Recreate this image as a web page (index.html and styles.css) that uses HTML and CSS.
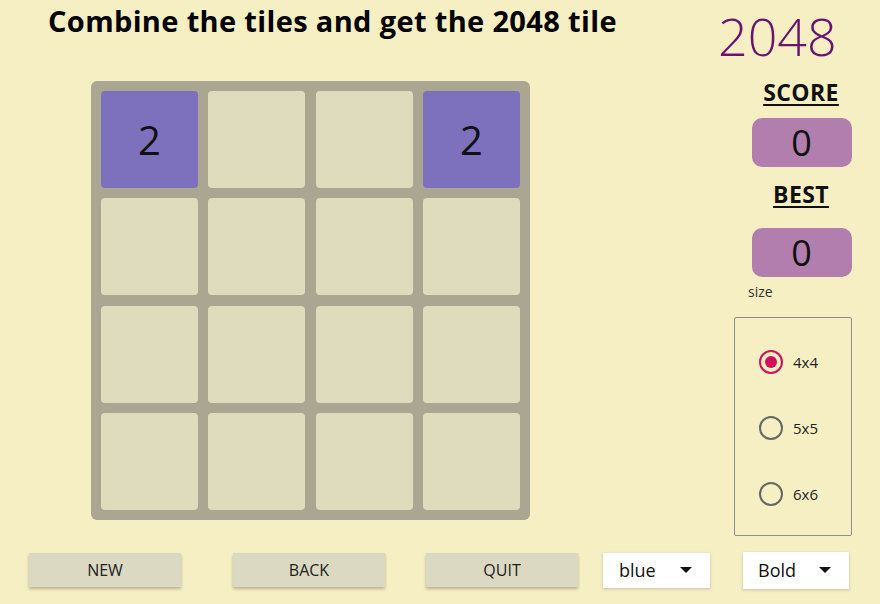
FILE: index.html
```html
<!DOCTYPE html>
<html>
<head>
<meta charset="utf-8">
<link rel="stylesheet" href="styles.css">
</head>
<body>
<div class="app">
  <div class="main">
    <h1 class="title">Combine the tiles and get the 2048 tile</h1>
    <div class="board">
      <div class="tile t2">2</div><div class="tile"></div><div class="tile"></div><div class="tile t2">2</div>
      <div class="tile"></div><div class="tile"></div><div class="tile"></div><div class="tile"></div>
      <div class="tile"></div><div class="tile"></div><div class="tile"></div><div class="tile"></div>
      <div class="tile"></div><div class="tile"></div><div class="tile"></div><div class="tile"></div>
    </div>
  </div>
  <div class="side">
    <div class="logo">2048</div>
    <div class="label l-score">SCORE</div>
    <div class="scorebox sb-score">0</div>
    <div class="label l-best">BEST</div>
    <div class="scorebox sb-best">0</div>
    <div class="sizelabel">size</div>
    <div class="sizes">
      <div class="opt"><span class="radio on"></span><span>4x4</span></div>
      <div class="opt"><span class="radio"></span><span>5x5</span></div>
      <div class="opt"><span class="radio"></span><span>6x6</span></div>
    </div>
  </div>
</div>
<div class="bar">
  <div class="btn b-new">NEW</div>
  <div class="btn b-back">BACK</div>
  <div class="btn b-quit">QUIT</div>
  <div class="select s-blue"><span>blue</span><span class="caret"></span></div>
  <div class="select s-bold"><span>Bold</span><span class="caret"></span></div>
</div>
</body>
</html>
```
FILE: styles.css
```css
* { box-sizing: border-box; }
html, body { margin: 0; padding: 0; }
body {
  width: 880px; height: 604px; overflow: hidden;
  background: #f6efc4;
  font-family: "Open Sans", "Noto Sans", sans-serif;
  color: #111;
}
.app { display: flex; height: 541px; }
.main { width: 715px; flex: none; display: flex; flex-direction: column; }
.title {
  margin: 0; padding: 2px 0 0 48px;
  font-size: 29px; font-weight: 700; line-height: 38px; letter-spacing: 0.35px;
  color: #000; white-space: nowrap;
}
.board {
  margin: 41px 0 0 91px;
  width: 439px; height: 439px;
  background: #aaa692; border-radius: 6px;
  padding: 10px;
  display: grid; grid-template-columns: repeat(4, 1fr); grid-template-rows: repeat(4, 1fr);
  gap: 10.3px;
}
.tile {
  background: #dedcbc; border-radius: 4px;
  display: flex; align-items: center; justify-content: center;
  font-size: 40px; color: #111;
}
.tile.t2 { background: #7d70bd; }
.side { width: 165px; flex: none; display: flex; flex-direction: column; align-items: center; }
.logo {
  align-self: flex-start;
  font-size: 52px; font-weight: 300; color: #6a1470; line-height: 72px;
  margin: 0 0 0 3px; white-space: nowrap;
}
.label {
  font-size: 23px; font-weight: 700; text-decoration: underline; text-decoration-thickness: 2px;
  text-underline-offset: 3px; line-height: 28px; margin-left: 7px; letter-spacing: 0.4px;
}
.l-score { margin-top: 6px; }
.l-best { margin-top: 0; }
.scorebox {
  width: 100px; height: 49px; margin-left: 8px;
  background: #b27eae; border-radius: 10px;
  display: flex; align-items: center; justify-content: center;
  font-size: 36px; color: #111;
}
.sb-score { margin-top: 12px; margin-bottom: 13px; }
.sb-best { margin-top: 20px; }
.sizelabel { align-self: flex-start; margin: 5px 0 0 33px; font-size: 14px; color: #333; line-height: 20px; }
.sizes {
  align-self: flex-start; margin: 15px 0 0 19px;
  width: 118px; height: 219px;
  border: 1px solid #8f8f8f; border-radius: 2px;
  display: flex; flex-direction: column; justify-content: center; gap: 40px;
  padding: 2px 0 0 24px;
}
.opt { display: flex; align-items: center; gap: 10px; font-size: 15px; color: #222; height: 26px; }
.radio {
  width: 24px; height: 24px; border-radius: 50%; border: 2px solid #666; display: inline-block;
  position: relative;
}
.radio.on { border-color: #d0105a; }
.radio.on::after {
  content: ""; position: absolute; left: 4px; top: 4px; width: 12px; height: 12px; border-radius: 50%;
  background: #d0105a;
}
.bar { display: flex; align-items: center; height: 58px; padding-left: 29px; }
.btn {
  width: 152px; height: 34px; background: #dbd9c1;
  box-shadow: 0 2px 3px rgba(0,0,0,0.25);
  display: flex; align-items: center; justify-content: center;
  font-size: 16px; color: #222;
}
.b-back { margin-left: 52px; }
.b-quit { margin-left: 41px; }
.select {
  background: #fff; height: 35px; box-shadow: 0 1px 3px rgba(0,0,0,0.2);
  display: flex; align-items: center; justify-content: space-between;
  font-size: 18px; color: #111; padding: 0 18px 0 16px;
}
.s-blue { width: 107px; margin-left: 25px; }
.s-bold { width: 106px; margin-left: 33px; height: 37px; padding-left: 15px; }
.caret { width: 0; height: 0; border-left: 6px solid transparent; border-right: 6px solid transparent; border-top: 6px solid #111; }
```
